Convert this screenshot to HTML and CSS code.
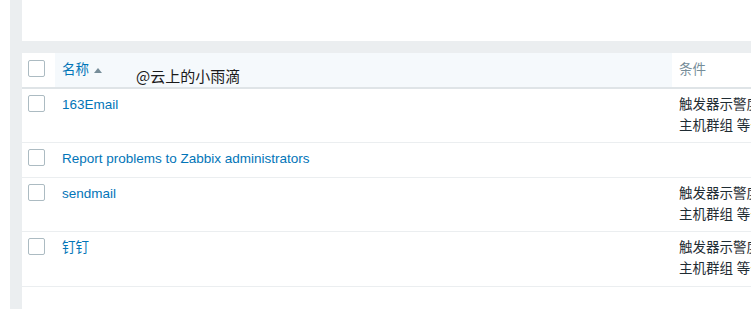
FILE: index.html
```html
<!DOCTYPE html>
<html lang="zh-CN">
<head>
    <meta charset="UTF-8">
    <meta name="viewport" content="width=device-width, initial-scale=1.0">
    <title>动作</title>
    <link rel="stylesheet" href="styles.css">
</head>
<body>
    <div class="wrapper">
        <div class="top-panel"></div>

        <div class="table-panel">
            <table class="list-table">
                <colgroup>
                    <col class="col-check">
                    <col class="col-name">
                    <col class="col-cond">
                </colgroup>
                <thead>
                    <tr>
                        <th class="cell-check"><span class="checkbox"></span></th>
                        <th class="sorted"><a href="#" class="link">名称</a><span class="arrow-up"></span></th>
                        <th class="muted">条件</th>
                    </tr>
                </thead>
                <tbody>
                    <tr>
                        <td class="cell-check"><span class="checkbox"></span></td>
                        <td><a href="#" class="link">163Email</a></td>
                        <td>触发器示警度 大于等于 一般严重<br>主机群组 等于 Linux servers</td>
                    </tr>
                    <tr class="single">
                        <td class="cell-check"><span class="checkbox"></span></td>
                        <td><a href="#" class="link">Report problems to Zabbix administrators</a></td>
                        <td></td>
                    </tr>
                    <tr>
                        <td class="cell-check"><span class="checkbox"></span></td>
                        <td><a href="#" class="link">sendmail</a></td>
                        <td>触发器示警度 大于等于 一般严重<br>主机群组 等于 Linux servers</td>
                    </tr>
                    <tr class="last">
                        <td class="cell-check"><span class="checkbox"></span></td>
                        <td><a href="#" class="link">钉钉</a></td>
                        <td>触发器示警度 大于等于 一般严重<br>主机群组 等于 Linux servers</td>
                    </tr>
                </tbody>
            </table>

            <!-- watermark pasted over the header -->
            <span class="watermark">@云上的小雨滴</span>
        </div>
    </div>
</body>
</html>
```

FILE: styles.css
```css
:root {
    --bg-gray: #ebeef0;
    --border-light: #ebeef0;
    --border-head: #dfe4e7;
    --checkbox-border: #acbbc2;
    --text-color: #1f2c33;
    --text-muted: #768d99;
    --link-color: #0275b8;
    --sorted-bg: #f5f9fc;
}

* {
    margin: 0;
    padding: 0;
    box-sizing: border-box;
}

html,
body {
    height: 100%;
}

body {
    font-family: "Liberation Sans", Arial, "Noto Sans CJK SC", sans-serif;
    font-size: 13.5px;
    color: var(--text-color);
    background-color: #fff;
    overflow: hidden;
}

.wrapper {
    display: flex;
    flex-direction: column;
    gap: 12px;
    height: 100%;
    margin-left: 10px;
    padding-left: 12px;
    background-color: var(--bg-gray);
}

.top-panel {
    height: 41px;
    flex-shrink: 0;
    background-color: #fff;
}

.table-panel {
    flex: 1;
    position: relative;
    overflow: hidden;
    background-color: #fff;
}

.list-table {
    width: 950px;
    table-layout: fixed;
    border-collapse: collapse;
}

.col-check {
    width: 33px;
}

.col-name {
    width: 617px;
}

.col-cond {
    width: 300px;
}

.list-table thead tr {
    height: 35px;
}

.list-table tbody tr {
    height: 54px;
}

.list-table tbody tr.single {
    height: 35px;
}

.list-table tbody tr.last {
    height: 55px;
}

.list-table th,
.list-table td {
    padding: 6px 7px;
    line-height: 20.5px;
    text-align: left;
    vertical-align: top;
    white-space: nowrap;
    overflow: hidden;
}

.list-table th {
    font-weight: normal;
    padding-top: 7px;
    border-bottom: 2px solid var(--border-head);
}

.list-table td {
    border-bottom: 1px solid var(--border-light);
}

.list-table .cell-check {
    padding: 6px 0 0 6px;
}

.list-table th.cell-check {
    padding-top: 7px;
}

.list-table th.sorted {
    background-color: var(--sorted-bg);
}

.list-table th.muted {
    color: var(--text-muted);
}

.checkbox {
    display: block;
    width: 17px;
    height: 17px;
    border: 1px solid var(--checkbox-border);
    border-radius: 2px;
    background-color: #fff;
}

.link {
    color: var(--link-color);
    text-decoration: none;
}

.arrow-up {
    display: inline-block;
    margin-left: 5px;
    vertical-align: 1px;
    border-left: 4px solid transparent;
    border-right: 4px solid transparent;
    border-bottom: 5px solid var(--text-muted);
}

.watermark {
    position: absolute;
    left: 114px;
    top: 13px;
    font-family: "Noto Sans CJK SC", sans-serif;
    font-size: 15px;
    line-height: 20px;
    color: #1a1a1a;
    white-space: nowrap;
}
```
